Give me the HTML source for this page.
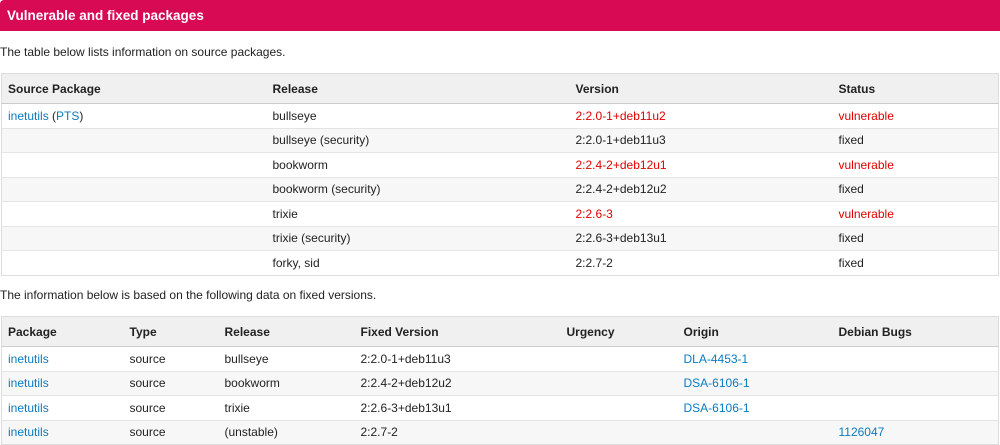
<!DOCTYPE html>
<html><head><style>
body{margin:0;width:1000px;height:445px;overflow:hidden;background:#fff;font-family:"Liberation Sans",sans-serif;font-size:12px;color:#222}
.h{background:#d70a53;height:31px;color:#fff;font-weight:bold;font-size:13.5px;line-height:32px;padding-left:7px;border-radius:4px 0 0 0}
p{margin:0;position:absolute;left:0;font-size:12px}
table{position:absolute;left:1px;width:998px;border-collapse:collapse;border:1px solid #ddd;table-layout:fixed}
th{background:#f0f0f0;text-align:left;height:29px;padding:0 6px;font-weight:bold;border-bottom:1px solid #ccc}
td{height:23.5px;padding:0 6px;border-top:1px solid #e4e4e4}
tr.g td{background:#f7f7f7}
a{color:#0a7bbf;text-decoration:none}
.r{color:#e00000}
</style></head><body>
<div class="h">Vulnerable and fixed packages</div>
<p style="top:45px">The table below lists information on source packages.</p>
<table style="top:73px">
<colgroup><col style="width:265px"><col style="width:303px"><col style="width:263px"><col></colgroup>
<tr><th>Source Package</th><th>Release</th><th>Version</th><th>Status</th></tr>
<tr><td><a>inetutils</a> (<a>PTS</a>)</td><td>bullseye</td><td class="r">2:2.0-1+deb11u2</td><td class="r">vulnerable</td></tr>
<tr class="g"><td></td><td>bullseye (security)</td><td>2:2.0-1+deb11u3</td><td>fixed</td></tr>
<tr><td></td><td>bookworm</td><td class="r">2:2.4-2+deb12u1</td><td class="r">vulnerable</td></tr>
<tr class="g"><td></td><td>bookworm (security)</td><td>2:2.4-2+deb12u2</td><td>fixed</td></tr>
<tr><td></td><td>trixie</td><td class="r">2:2.6-3</td><td class="r">vulnerable</td></tr>
<tr class="g"><td></td><td>trixie (security)</td><td>2:2.6-3+deb13u1</td><td>fixed</td></tr>
<tr><td></td><td>forky, sid</td><td>2:2.7-2</td><td>fixed</td></tr>
</table>
<p style="top:288px">The information below is based on the following data on fixed versions.</p>
<table style="top:316px">
<colgroup><col style="width:122px"><col style="width:95px"><col style="width:136px"><col style="width:206px"><col style="width:117px"><col style="width:155px"><col></colgroup>
<tr><th>Package</th><th>Type</th><th>Release</th><th>Fixed Version</th><th>Urgency</th><th>Origin</th><th>Debian Bugs</th></tr>
<tr><td><a>inetutils</a></td><td>source</td><td>bullseye</td><td>2:2.0-1+deb11u3</td><td></td><td><a>DLA-4453-1</a></td><td></td></tr>
<tr class="g"><td><a>inetutils</a></td><td>source</td><td>bookworm</td><td>2:2.4-2+deb12u2</td><td></td><td><a>DSA-6106-1</a></td><td></td></tr>
<tr><td><a>inetutils</a></td><td>source</td><td>trixie</td><td>2:2.6-3+deb13u1</td><td></td><td><a>DSA-6106-1</a></td><td></td></tr>
<tr class="g"><td><a>inetutils</a></td><td>source</td><td>(unstable)</td><td>2:2.7-2</td><td></td><td></td><td><a>1126047</a></td></tr>
</table>
</body></html>
